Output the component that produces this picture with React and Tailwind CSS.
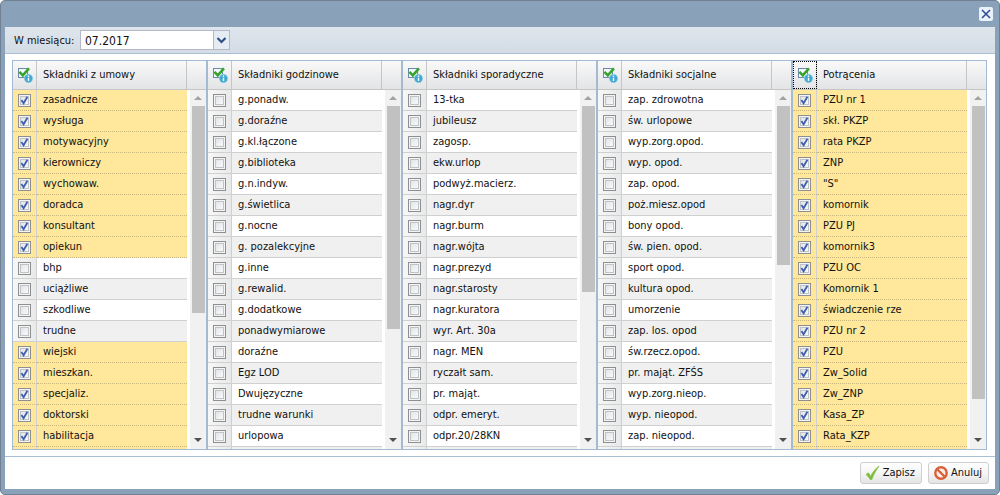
import { useState } from "react";

const KOLUMNY = [
  {
    id: "umowa",
    tytul: "Składniki z umowy",
    suwak: 207,
    pozycje: ["zasadnicze", "wysługa", "motywacyjny", "kierowniczy", "wychowaw.", "doradca", "konsultant", "opiekun", "bhp", "uciążliwe", "szkodliwe", "trudne", "wiejski", "mieszkan.", "specjaliz.", "doktorski", "habilitacja", ""],
    zaznaczone: [0, 1, 2, 3, 4, 5, 6, 7, 12, 13, 14, 15, 16, 17],
  },
  {
    id: "godzinowe",
    tytul: "Składniki godzinowe",
    suwak: 223,
    pozycje: ["g.ponadw.", "g.doraźne", "g.kl.łączone", "g.biblioteka", "g.n.indyw.", "g.świetlica", "g.nocne", "g. pozalekcyjne", "g.inne", "g.rewalid.", "g.dodatkowe", "ponadwymiarowe", "doraźne", "Egz LOD", "Dwujęzyczne", "trudne warunki", "urlopowa", ""],
    zaznaczone: [],
  },
  {
    id: "sporadyczne",
    tytul: "Składniki sporadyczne",
    suwak: 186,
    pozycje: ["13-tka", "jubileusz", "zagosp.", "ekw.urlop", "podwyż.macierz.", "nagr.dyr", "nagr.burm", "nagr.wójta", "nagr.prezyd", "nagr.starosty", "nagr.kuratora", "wyr. Art. 30a", "nagr. MEN", "ryczałt sam.", "pr. mająt.", "odpr. emeryt.", "odpr.20/28KN", ""],
    zaznaczone: [],
  },
  {
    id: "socjalne",
    tytul: "Składniki socjalne",
    suwak: 159,
    pozycje: ["zap. zdrowotna", "św. urlopowe", "wyp.zorg.opod.", "wyp. opod.", "zap. opod.", "poż.miesz.opod", "bony opod.", "św. pien. opod.", "sport opod.", "kultura opod.", "umorzenie", "zap. los. opod", "św.rzecz.opod.", "pr. mająt. ZFŚS", "wyp.zorg.nieop.", "wyp. nieopod.", "zap. nieopod.", ""],
    zaznaczone: [],
  },
  {
    id: "potracenia",
    tytul: "Potrącenia",
    suwak: 293,
    aktywna: true,
    pozycje: ["PZU nr 1", "skł. PKZP", "rata PKZP", "ZNP", "\"S\"", "komornik", "PZU PJ", "komornik3", "PZU OC", "Komornik 1", "świadczenie rze", "PZU nr 2", "PZU", "Zw_Solid", "Zw_ZNP", "Kasa_ZP", "Rata_KZP", ""],
    zaznaczone: [0, 1, 2, 3, 4, 5, 6, 7, 8, 9, 10, 11, 12, 13, 14, 15, 16, 17],
  },
];

function IkonaZaznacz() {
  return (
    <svg width="16" height="16" viewBox="0 0 16 16" aria-hidden="true">
      <rect x="1.5" y="1.5" width="9" height="9" fill="#f3f8fc" stroke="#6a8aa8" />
      <path d="M2.4 4.8l3.4 3.600 6.200-7" fill="none" stroke="#36a329" strokeWidth="2.5" />
      <circle cx="11.5" cy="11.5" r="4.2" fill="#43a9cf" stroke="#9bd6ea" strokeWidth=".6" />
      <path d="M11.5 10.8v3.2M11.500 8.600v1.300" stroke="#fff" strokeWidth="1.4" />
    </svg>
  );
}

function Pole({ zaznaczone, onChange, id, etykieta }) {
  return (
    <span className="relative block size-[13px]">
      <input
        id={id}
        type="checkbox"
        checked={zaznaczone}
        onChange={onChange}
        aria-label={etykieta || "kolejny składnik"}
        className="block size-[13px] appearance-none border border-[#8e8f8f] bg-linear-to-br from-[#dcdfe3] to-white shadow-[inset_0_0_0_1px_#f4f4f4,inset_0_0_0_2px_#bfc3c8]"
      />
      {zaznaczone && (
        <svg className="pointer-events-none absolute inset-0" width="13" height="13" viewBox="0 0 13 13" aria-hidden="true">
          <path d="M3.4 6l2.200 3.300L9.400 2.800" fill="none" stroke="#3f5fae" strokeWidth="1.800" />
        </svg>
      )}
    </span>
  );
}

function Kolumna({ kolumna }) {
  const [zaznaczone, setZaznaczone] = useState(kolumna.zaznaczone);

  const przelacz = (i) =>
    setZaznaczone((prev) => (prev.includes(i) ? prev.filter((n) => n !== i) : [...prev, i]));

  const przelaczWszystkie = () =>
    setZaznaczone(zaznaczone.length === kolumna.pozycje.length ? [] : kolumna.pozycje.map((_, i) => i));

  return (
    <section className="flex min-w-0 flex-1 flex-col border border-[#a3bad2]" aria-label={kolumna.tytul}>
      {/* Nagłówek */}
      <div className="flex h-[29px] shrink-0 border-b border-[#c5c5c5] bg-linear-to-b from-[#f9f9f9] to-[#e3e4e6]">
        <button
          type="button"
          onClick={przelaczWszystkie}
          aria-label={`Zaznacz wszystkie: ${kolumna.tytul}`}
          className={`flex w-6 items-center justify-center border-r border-[#c5c5c5] ${kolumna.aktywna ? "outline-1 -outline-offset-1 outline-dotted outline-black" : ""}`}
        >
          <IkonaZaznacz />
        </button>
        <h2 className="flex-1 truncate border-r border-[#c5c5c5] px-1.5 leading-7">{kolumna.tytul}</h2>
        <div className="w-[19px]" />
      </div>

      {/* Lista */}
      <div className="flex min-h-0 flex-1">
        <div className="min-w-0 flex-1 overflow-hidden">
          <table className="w-full table-fixed border-separate border-spacing-0">
            <tbody>
              {kolumna.pozycje.map((p, i) => {
                const wybrany = zaznaczone.includes(i);
                const id = `${kolumna.id}-${i}`;
                return (
                  <tr key={id} className={wybrany ? "bg-[#ffe79c]" : i % 2 ? "bg-[#f0f0f0]" : "bg-white"}>
                    <td
                      className={`h-[21px] w-6 border-r border-b border-r-[#d0d0d0] pl-[5px] ${
                        wybrany
                          ? "border-b-[#c8b67c] [border-bottom-style:dotted]"
                          : "border-b-[#d0d0d0] bg-linear-to-r from-[#f7f7f7] to-[#e8e9ea]"
                      }`}
                    >
                      <Pole id={id} etykieta={p} zaznaczone={wybrany} onChange={() => przelacz(i)} />
                    </td>
                    <td
                      className={`h-[21px] truncate border-b pl-1.5 leading-5 ${
                        wybrany ? "border-b-[#c8b67c] [border-bottom-style:dotted]" : "border-b-[#d0d0d0]"
                      }`}
                    >
                      <label htmlFor={id}>{p}</label>
                    </td>
                  </tr>
                );
              })}
            </tbody>
          </table>
        </div>
        {/* Pasek przewijania */}
        <div className="ml-[3px] flex w-4 shrink-0 flex-col items-center bg-[#f1f1f1]" aria-hidden="true">
          <svg className="h-4 w-4 shrink-0" viewBox="0 0 16 16">
            <path d="M4 10l4-4 4 4z" fill="#a3a3a3" />
          </svg>
          <div className="w-[13px] bg-[#c1c1c1]" style={{ height: kolumna.suwak }} />
          <svg className="mt-auto h-4 w-4 shrink-0" viewBox="0 0 16 16">
            <path d="M4 5l4 4 4-4z" fill="#505050" />
          </svg>
        </div>
      </div>
    </section>
  );
}

const PRZYCISK =
  "flex h-[22px] items-center gap-0.5 rounded-[3px] border border-[#cfcfcf] bg-linear-to-b from-white via-[#f5f5f5] to-[#e4e4e4] pr-1.5 pl-1";

export default function App() {
  const [miesiac, setMiesiac] = useState("07.2017");

  return (
    <main className="flex h-screen flex-col rounded-[5px] border border-[#6f8192] bg-[#8aa2b9] px-1 pb-[5px] font-['DejaVu_Sans_Condensed','Noto_Sans',sans-serif] text-[11px] text-[#111]">
      {/* Pasek tytułu */}
      <header className="flex h-[26px] shrink-0 items-center justify-end px-0.5">
        <button type="button" aria-label="Zamknij" className="flex size-3.5 items-center justify-center rounded-[2px] bg-[#e9f1fb]">
          <svg width="10" height="10" viewBox="0 0 10 10" aria-hidden="true">
            <path d="M1 1l8 8M9 1l-8 8" stroke="#2d4795" strokeWidth="1.5" />
          </svg>
        </button>
      </header>

      <div className="flex min-h-0 flex-1 flex-col bg-white">
        <div className="flex h-[27px] shrink-0 items-center border-b border-[#a9bfd3] bg-linear-to-b from-[#dfe5ec] to-[#d3dce6] pl-[9px]">
          <label htmlFor="miesiac" className="w-[66px] pt-0.5">W miesiącu:</label>
          <div className="relative">
            <select
              id="miesiac"
              value={miesiac}
              onChange={(e) => setMiesiac(e.target.value)}
              className="block h-5 w-[150px] appearance-none border border-[#b5b8c8] bg-white pt-0.5 pl-1 text-xs"
            >
              <option>07.2017</option>
              <option>06.2017</option>
            </select>
            <svg className="pointer-events-none absolute top-0 right-0" width="17" height="20" viewBox="0 0 17 20" aria-hidden="true">
              <rect x=".5" y=".5" width="16" height="19" fill="#e6ecf4" stroke="#b5b8c8" />
              <path d="M4.500 8l4 4 4-4" fill="none" stroke="#2f4f86" strokeWidth="2.200" />
            </svg>
          </div>
        </div>

        <div className="flex min-h-0 flex-1 pt-1.5 pr-2 pb-1.5 pl-[7px]">
          {KOLUMNY.map((k) => (
            <Kolumna key={k.id} kolumna={k} />
          ))}
        </div>

        <footer className="flex h-[33px] shrink-0 items-center justify-end gap-1.5 border-t border-[#a9bfd3] px-1.5">
          <button type="button" className={PRZYCISK}>
            <svg width="16" height="16" viewBox="0 0 16 16" aria-hidden="true">
              <path d="M1 9.500l2.300-1.600 2.400 3.300C7.500 7.500 10.500 3.500 14 1c-2.800 4-5.400 8.500-7.200 13.500H5.200C4.200 12.500 2.800 10.800 1 9.500z" fill="#7cba3a" stroke="#8cc852" strokeWidth="1" />
            </svg>
            Zapisz
          </button>
          <button type="button" className={PRZYCISK}>
            <svg width="16" height="16" viewBox="0 0 16 16" aria-hidden="true">
              <circle cx="8" cy="8" r="5.700" fill="#fbeee8" stroke="#d9603a" strokeWidth="2.400" />
              <path d="M4 4l8 8" stroke="#d9603a" strokeWidth="2.400" />
            </svg>
            Anuluj
          </button>
        </footer>
      </div>
    </main>
  );
}
